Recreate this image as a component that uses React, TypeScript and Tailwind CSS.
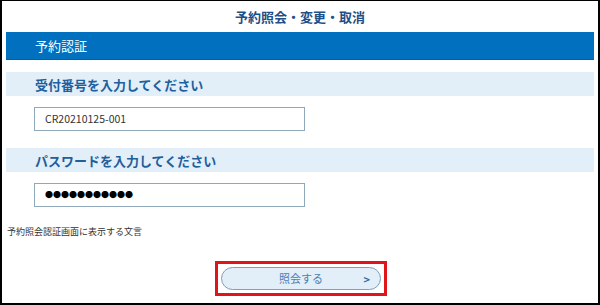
import React from "react";

const jp = { fontFamily: '"Noto Sans CJK JP", "Noto Sans", sans-serif' };

function SectionHeading({ children }: { children: React.ReactNode }) {
  return (
    <div className="mx-[4px] flex h-[24px] items-center bg-[#e2eef8] pl-[29px] text-[13px] font-bold leading-none text-[#1f5f9c]">
      {children}
    </div>
  );
}

function Field({ value }: { value: string }) {
  return (
    <div className="ml-[32px] flex h-[24px] w-[271px] items-center border border-[#8fa9bb] bg-white pl-[10px] text-[10.5px] text-[#333]">
      {value}
    </div>
  );
}

export default function App() {
  return (
    <div
      className="flex h-[305px] w-[600px] flex-col border-t border-r-2 border-b-2 border-l-2 border-black bg-white"
      style={jp}
    >
      <div className="flex h-[31px] items-center justify-center text-[13px] font-bold text-[#1e4f86]">
        予約照会・変更・取消
      </div>
      <div className="mx-[4px] flex h-[28px] items-center border-b border-[#0b5c9c] bg-[#0070bf] pl-[29px] text-[13px] text-white">
        予約認証
      </div>

      <div className="mt-[12px]">
        <SectionHeading>受付番号を入力してください</SectionHeading>
      </div>
      <div className="mt-[11px]">
        <Field value="CR20210125-001" />
      </div>

      <div className="mt-[17px]">
        <SectionHeading>パスワードを入力してください</SectionHeading>
      </div>
      <div className="mt-[11px]">
        <div className="ml-[32px] flex h-[24px] w-[271px] items-center border border-[#8fa9bb] bg-white pl-[10px] text-[8px] text-black">
          ●●●●●●●●●●●
        </div>
      </div>

      <div className="mt-[19px] pl-[5px] text-[9px] leading-[12px] text-[#333]">
        予約照会認証画面に表示する文言
      </div>

      <div className="mt-[23px] flex justify-center pl-[2px]">
        <div className="border-[3px] border-[#e0141b] px-[3px] py-[3px]">
          <button className="relative flex h-[23px] w-[160px] items-center justify-center rounded-full border border-[#7f9fba] bg-[#e2eef8] text-[11px] text-[#4a7fb2]">
            照会する
            <span className="absolute right-[10px] top-1/2 -translate-y-1/2 text-[11px] font-bold text-[#2f6aa3]">
              &gt;
            </span>
          </button>
        </div>
      </div>
    </div>
  );
}
